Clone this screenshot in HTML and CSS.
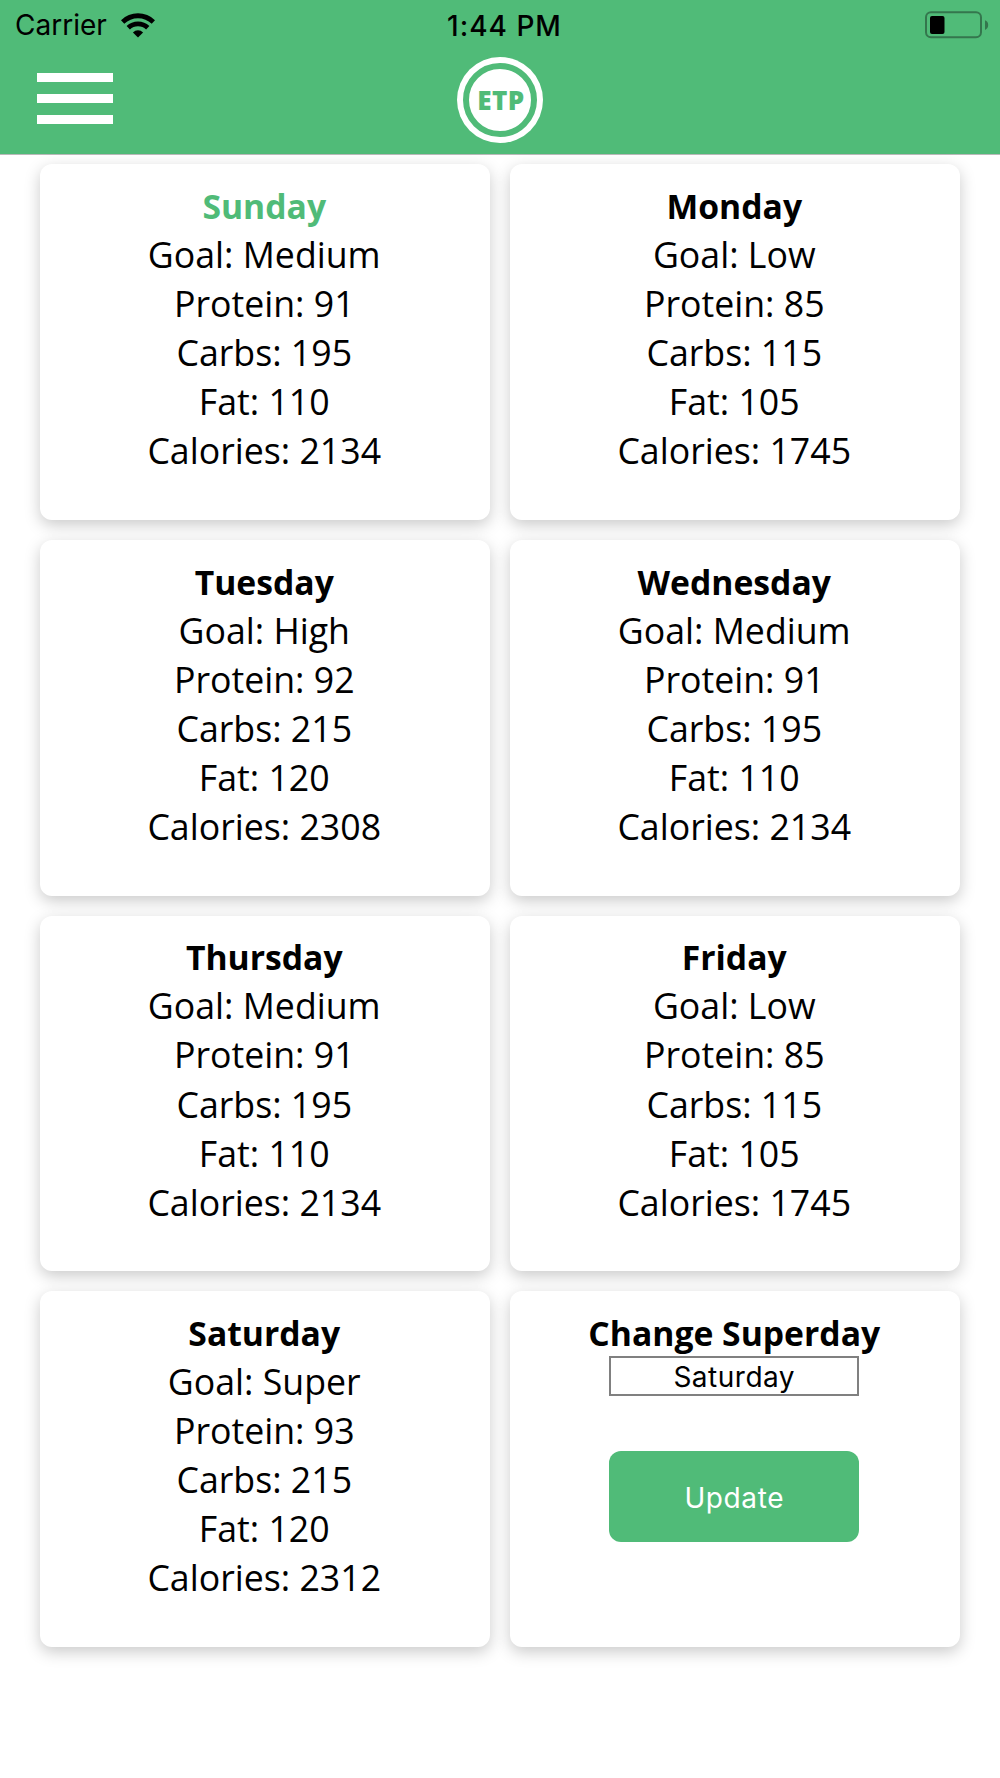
FILE: index.html
```
<!DOCTYPE html>
<html lang="en">
<head>
  <meta charset="UTF-8">
  <meta name="viewport" content="width=device-width, initial-scale=1.0">
  <title>ETP</title>
  <link rel="stylesheet" href="styles.css">
</head>
<body>

  <header class="header">
    <div class="status-bar">
      <div class="status-left">
        <span class="carrier">Carrier</span>
        <svg class="wifi" width="34" height="25" viewBox="0 0 34 25">
          <path d="M17 24.6L11.9 19.4A7.4 7.4 0 0 1 22.1 19.4Z"/>
          <path d="M5.6 13.1A16.3 16.3 0 0 1 28.4 13.1L25.1 16.5A11.6 11.6 0 0 0 8.9 16.5Z"/>
          <path d="M0 7.2A24.2 24.2 0 0 1 34 7.2L30.7 10.8A19.7 19.7 0 0 0 3.3 10.8Z"/>
        </svg>
      </div>
      <span class="time">1:44 PM</span>
      <div class="status-right">
        <svg class="battery" width="64" height="28" viewBox="0 0 64 28">
          <rect class="battery-shell" x="1" y="1.2" width="55" height="25" rx="5"/>
          <path class="battery-cap" d="M60 9.3a5.2 5.2 0 0 1 0 9.6z"/>
          <rect x="5" y="5" width="14.5" height="18" rx="2"/>
        </svg>
      </div>
    </div>
    <div class="nav">
      <div class="menu">
        <span class="menu-bar"></span>
        <span class="menu-bar"></span>
        <span class="menu-bar"></span>
      </div>
      <div class="logo">
        <div class="logo-inner">ETP</div>
      </div>
    </div>
  </header>

  <main class="days">
    <div class="card">
      <h3 class="day today">Sunday</h3>
      <p>Goal: Medium</p>
      <p>Protein: 91</p>
      <p>Carbs: 195</p>
      <p>Fat: 110</p>
      <p>Calories: 2134</p>
    </div>
    <div class="card">
      <h3 class="day">Monday</h3>
      <p>Goal: Low</p>
      <p>Protein: 85</p>
      <p>Carbs: 115</p>
      <p>Fat: 105</p>
      <p>Calories: 1745</p>
    </div>
    <div class="card">
      <h3 class="day">Tuesday</h3>
      <p>Goal: High</p>
      <p>Protein: 92</p>
      <p>Carbs: 215</p>
      <p>Fat: 120</p>
      <p>Calories: 2308</p>
    </div>
    <div class="card">
      <h3 class="day">Wednesday</h3>
      <p>Goal: Medium</p>
      <p>Protein: 91</p>
      <p>Carbs: 195</p>
      <p>Fat: 110</p>
      <p>Calories: 2134</p>
    </div>
    <div class="card">
      <h3 class="day">Thursday</h3>
      <p>Goal: Medium</p>
      <p>Protein: 91</p>
      <p>Carbs: 195</p>
      <p>Fat: 110</p>
      <p>Calories: 2134</p>
    </div>
    <div class="card">
      <h3 class="day">Friday</h3>
      <p>Goal: Low</p>
      <p>Protein: 85</p>
      <p>Carbs: 115</p>
      <p>Fat: 105</p>
      <p>Calories: 1745</p>
    </div>
    <div class="card">
      <h3 class="day">Saturday</h3>
      <p>Goal: Super</p>
      <p>Protein: 93</p>
      <p>Carbs: 215</p>
      <p>Fat: 120</p>
      <p>Calories: 2312</p>
    </div>
    <div class="card">
      <h3 class="day">Change Superday</h3>
      <div class="superday">Saturday</div>
      <button class="update" type="button">Update</button>
    </div>
  </main>

</body>
</html>
```
FILE: styles.css
```
:root {
  --green: #50bb78;
}

* {
  box-sizing: border-box;
  margin: 0;
  padding: 0;
}

body {
  min-height: 100vh;
  background: #fff;
  color: #000;
  font-family: "Open Sans", "Noto Sans", sans-serif;
}

/* header */
.header {
  height: 155px;
  background: var(--green);
  border-bottom: 1px solid #b9b9b9;
}

.status-bar {
  display: grid;
  grid-template-columns: 1fr auto 1fr;
  align-items: center;
  height: 50px;
  padding: 0 11px 0 15px;
  font-family: Inter, "Liberation Sans", sans-serif;
  font-size: 28px;
}

.status-left {
  display: flex;
  align-items: center;
  gap: 14px;
}

.time {
  padding: 1px 0 0 5px;
  font-weight: 500;
  letter-spacing: 1px;
}

.status-right {
  display: flex;
  justify-content: flex-end;
}

.battery-shell {
  fill: none;
  stroke: #34764d;
  stroke-width: 2;
}

.battery-cap {
  fill: #34764d;
}

.nav {
  display: grid;
  grid-template-columns: 1fr auto 1fr;
  align-items: start;
  padding: 7px 37px 0;
}

.menu {
  display: flex;
  flex-direction: column;
  gap: 12px;
  width: 76px;
  padding-top: 16px;
}

.menu-bar {
  height: 9px;
  background: #fff;
}

.logo {
  width: 86px;
  height: 86px;
  padding: 6px;
  border-radius: 50%;
  background: #fff;
}

.logo-inner {
  display: flex;
  align-items: center;
  justify-content: center;
  width: 74px;
  height: 74px;
  padding-left: 2px;
  border: 6px solid var(--green);
  border-radius: 50%;
  color: var(--green);
  font-size: 26px;
  font-weight: 800;
  letter-spacing: 0.4px;
}

/* cards */
.days {
  display: grid;
  grid-template-columns: 450px 450px;
  grid-auto-rows: 355.7px;
  gap: 20px;
  padding: 9.3px 40px 40px;
}

.card {
  padding: 18.7px 1.5px 0 0;
  border-radius: 12px;
  background: #fff;
  box-shadow: 0 5px 16px rgba(0, 0, 0, 0.21);
  text-align: center;
  font-size: 35.7px;
  line-height: 49.1px;
}

.day {
  font-size: 33.7px;
  font-weight: 700;
  line-height: 47px;
}

.today {
  color: var(--green);
}

.superday {
  width: 250px;
  height: 40px;
  margin: -1.4px auto 0;
  border: 2px solid #808080;
  font-family: Inter, "Liberation Sans", sans-serif;
  font-size: 28px;
  line-height: 38px;
  letter-spacing: 0.5px;
}

.update {
  width: 250px;
  height: 91px;
  margin-top: 55px;
  padding-top: 3px;
  border: none;
  border-radius: 12px;
  background: var(--green);
  color: #fff;
  font-family: Inter, "Liberation Sans", sans-serif;
  font-size: 28px;
  letter-spacing: 0.6px;
}
```
